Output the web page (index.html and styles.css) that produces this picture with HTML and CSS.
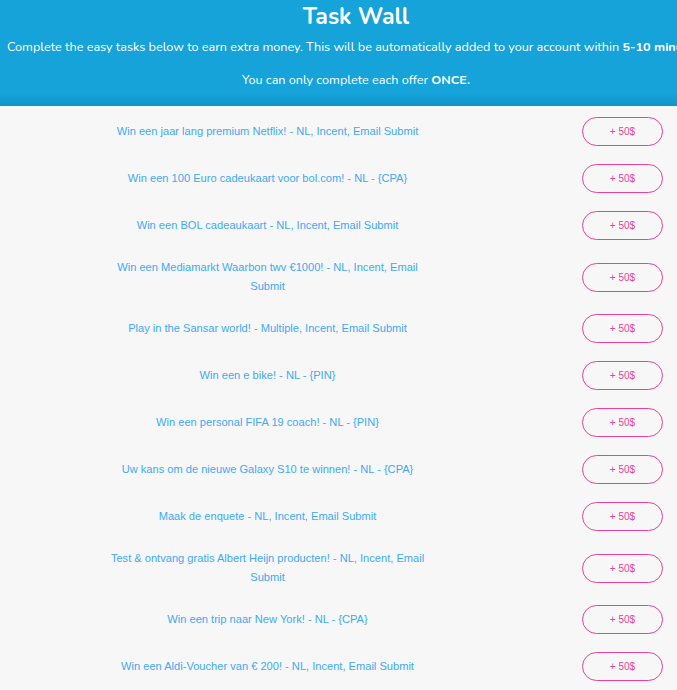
FILE: index.html
```html
<!DOCTYPE html>
<html>
<head>
<meta charset="utf-8">
<title>Task Wall</title>
<link rel="stylesheet" href="styles.css">
</head>
<body>
<div class="page">
  <header class="hero">
    <div class="hero-inner">
      <h1 class="hero-title">Task Wall</h1>
      <p class="hero-text hero-text-long">Complete the easy tasks below to earn extra money. This will be automatically added to your account within <b>5-10 minutes</b>.</p>
      <p class="hero-text">You can only complete each offer <b>ONCE.</b></p>
    </div>
  </header>
  <main class="tasks">
    <div class="task"><div class="task-name"><a>Win een jaar lang premium Netflix! - NL, Incent, Email Submit</a></div><div class="task-action"><button class="reward">+ 50$</button></div></div>
    <div class="task"><div class="task-name"><a>Win een 100 Euro cadeukaart voor bol.com! - NL - {CPA}</a></div><div class="task-action"><button class="reward">+ 50$</button></div></div>
    <div class="task"><div class="task-name"><a>Win een BOL cadeaukaart - NL, Incent, Email Submit</a></div><div class="task-action"><button class="reward">+ 50$</button></div></div>
    <div class="task"><div class="task-name"><a>Win een Mediamarkt Waarbon twv €1000! - NL, Incent, Email Submit</a></div><div class="task-action"><button class="reward">+ 50$</button></div></div>
    <div class="task"><div class="task-name"><a>Play in the Sansar world! - Multiple, Incent, Email Submit</a></div><div class="task-action"><button class="reward">+ 50$</button></div></div>
    <div class="task"><div class="task-name"><a>Win een e bike! - NL - {PIN}</a></div><div class="task-action"><button class="reward">+ 50$</button></div></div>
    <div class="task"><div class="task-name"><a>Win een personal FIFA 19 coach! - NL - {PIN}</a></div><div class="task-action"><button class="reward">+ 50$</button></div></div>
    <div class="task"><div class="task-name"><a>Uw kans om de nieuwe Galaxy S10 te winnen! - NL - {CPA}</a></div><div class="task-action"><button class="reward">+ 50$</button></div></div>
    <div class="task"><div class="task-name"><a>Maak de enquete - NL, Incent, Email Submit</a></div><div class="task-action"><button class="reward">+ 50$</button></div></div>
    <div class="task"><div class="task-name"><a>Test &amp; ontvang gratis Albert Heijn producten! - NL, Incent, Email Submit</a></div><div class="task-action"><button class="reward">+ 50$</button></div></div>
    <div class="task"><div class="task-name"><a>Win een trip naar New York! - NL - {CPA}</a></div><div class="task-action"><button class="reward">+ 50$</button></div></div>
    <div class="task"><div class="task-name"><a>Win een Aldi-Voucher van € 200! - NL, Incent, Email Submit</a></div><div class="task-action"><button class="reward">+ 50$</button></div></div>
  </main>
</div>
</body>
</html>
```
FILE: styles.css
```css
html, body {
  margin: 0;
  padding: 0;
  background: #f7f7f7;
}
.page {
  width: 677px;
  overflow: hidden;
  background: #f7f7f7;
}
.hero {
  height: 106px;
  background: linear-gradient(to bottom, #15a3d9 0%, #15a3d9 88%, #1194c7 100%);
  color: #ffffff;
  font-family: "Nunito", "Lato", "Open Sans", sans-serif;
}
.hero-inner {
  width: 712px;
  padding-top: 3px;
  text-align: center;
}
.hero-title {
  margin: 0;
  font-size: 23px;
  line-height: 28px;
  font-weight: 700;
}
.hero-text {
  margin: 6px 0 0;
  font-size: 12.65px;
  line-height: 20px;
  white-space: nowrap;
}
.hero-text + .hero-text {
  margin-top: 13px;
}
.hero-text-long {
  padding-left: 7px;
  text-align: left;
}
.hero-text b {
  font-weight: 700;
}
.tasks {
  padding-top: 2px;
  border-bottom: 1px solid #e4e4e4;
  font-family: "Liberation Sans", Arial, sans-serif;
}
.task {
  display: grid;
  grid-template-columns: 535px 1fr;
  align-items: center;
  padding: 9px 14px 9px 0;
}
.task-name {
  display: flex;
  justify-content: center;
}
.task-name a {
  display: block;
  max-width: 330px;
  text-align: center;
  color: #3fa9f5;
  font-size: 11.1px;
  line-height: 19px;
}
.task-action {
  display: flex;
  justify-content: flex-end;
}
.reward {
  width: 81px;
  height: 29px;
  border: 1px solid #ec3f97;
  border-radius: 15px;
  background: transparent;
  color: #ec3f97;
  font-family: "Liberation Sans", Arial, sans-serif;
  font-size: 10px;
  padding: 0;
}
```
